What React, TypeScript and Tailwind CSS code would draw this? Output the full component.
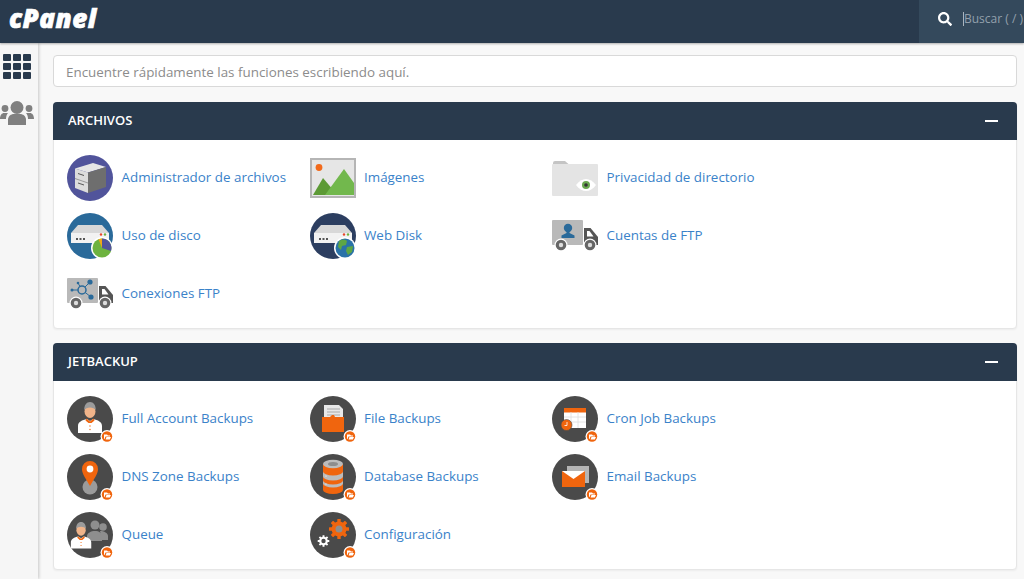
import React from "react";

const Badge = () => (
  <g>
    <circle cx="40" cy="40.5" r="6.5" fill="#fff" />
    <circle cx="40" cy="40.5" r="5.2" fill="#f0650e" />
    <path d="M37 38.5h3l1 1h2v1h-4.500l-1 2.500h-.5zM39.500 41h4.500l-1.200 2.500h-4.200z" fill="#fff" />
  </g>
);
const Dark = ({ children }: { children?: React.ReactNode }) => (
  <svg viewBox="0 0 46 46" className="w-[46px] h-[46px] shrink-0">
    <circle cx="23" cy="23" r="23" fill="#4a4a4a" />
    {children}
    <Badge />
  </svg>
);
const Person = () => (
  <g>
    <ellipse cx="23" cy="15.500" rx="5.500" ry="6.500" fill="#f0b48a" />
    <path d="M17.200 14c0-5 2.300-8 5.800-8s5.800 3 5.800 8c-2-3.500-9.600-3.500-11.600 0z" fill="#9b9b9b" />
    <path d="M11 37v-7c0-4 4-6 9-7l3 2 3-2c5 1 9 3 9 7v7z" fill="#fff" />
    <path d="M19.500 22.500l3.500 3 3.500-3 1 2-3 2.500h-3l-3-2.500z" fill="#f0650e" />
    <circle cx="23" cy="30" r=".7" fill="#f0650e" />
    <circle cx="23" cy="33.500" r=".7" fill="#f0650e" />
  </g>
);
const Server = ({ bg, children }: { bg: string; children: React.ReactNode }) => (
  <svg viewBox="0 0 46 46" className="w-[46px] h-[46px] shrink-0">
    <circle cx="23" cy="23" r="23" fill={bg} />
    <path d="M4 20l7-8h24l7 8z" fill="#d8d8d8" />
    <path d="M4 20h38v10H4z" fill="#f2f2f2" />
    <rect x="9" y="25" width="2" height="2" fill="#555" />
    <rect x="12.500" y="25" width="2" height="2" fill="#555" />
    <rect x="16" y="25" width="2" height="2" fill="#555" />
    <circle cx="34" cy="21.500" r="1.200" fill="#e8452c" />
    <circle cx="38" cy="21.500" r="1.200" fill="#6db33f" />
    <circle cx="35" cy="35" r="11" fill="#fff" />
    {children}
  </svg>
);
const Truck = ({ children }: { children: React.ReactNode }) => (
  <svg viewBox="0 0 46 46" className="w-[46px] h-[46px] shrink-0">
    <rect x="0" y="7" width="31" height="25" rx="1" fill="#b9b9b9" />
    <path d="M32 15h6.500l7.500 9v8H32z" fill="#555" />
    <path d="M35 18h2.500l4 5.500H35z" fill="#fff" />
    {children}
    <circle cx="9" cy="32" r="6.500" fill="#fff" />
    <circle cx="9" cy="32" r="5.300" fill="#666" />
    <circle cx="9" cy="32" r="2.200" fill="#ddd" />
    <circle cx="38" cy="32" r="6.500" fill="#fff" />
    <circle cx="38" cy="32" r="5.300" fill="#666" />
    <circle cx="38" cy="32" r="2.200" fill="#ddd" />
  </svg>
);

const FileManager = () => (
  <svg viewBox="0 0 46 46" className="w-[46px] h-[46px] shrink-0">
    <circle cx="23" cy="23" r="23" fill="#51549b" />
    <path d="M8 13.500L26 8l13 4-18 5.500z" fill="#e6e6e6" />
    <path d="M8 13.500l13 4V38L8 33z" fill="#dcdcdc" />
    <path d="M21 17.500l18-5.500v20l-18 6z" fill="#6e6e6e" />
    <path d="M8 23l13 4.500v1L8 24z" fill="#999" />
    <path d="M11 18l6 2v1l-6-2zM11 27.500l6 2v1l-6-2z" fill="#555" />
  </svg>
);
const Images = () => (
  <svg viewBox="0 0 46 40" className="w-[46px] h-[40px] shrink-0">
    <rect x="0" y="0" width="46" height="40" fill="#b5b5b5" />
    <rect x="2" y="2" width="42" height="36" fill="#e6e6e6" />
    <circle cx="9" cy="9.500" r="3.400" fill="#f26a1b" />
    <path d="M3 37l10-17 11 13-3 4z" fill="#5c9a35" />
    <path d="M15 37l19-26 10 14v12z" fill="#72b84d" />
  </svg>
);
const Privacy = () => (
  <svg viewBox="0 0 46 36" className="w-[46px] h-[36px] shrink-0">
    <path d="M1 3a2 2 0 012-2h10l4 3.500H1z" fill="#c4c4c4" />
    <rect x="0" y="4" width="46" height="32" rx="1" fill="#e4e4e4" />
    <path d="M24 25c6-8 14-8 20 0-6 8-14 8-20 0z" fill="#fff" />
    <circle cx="34" cy="25" r="4" fill="#6aa84f" />
    <circle cx="34" cy="25" r="1.800" fill="#333" />
  </svg>
);
const DiskUse = () => (
  <Server bg="#2a6a9a">
    <circle cx="35" cy="35" r="9.500" fill="#6db33f" />
    <path d="M35 35V25.500a9.500 9.500 0 019 12.500z" fill="#51549b" />
    <path d="M35 35l-3.500-8.800a9.500 9.500 0 013.500-.7z" fill="#f0a818" />
  </Server>
);
const WebDisk = () => (
  <Server bg="#2c3e60">
    <circle cx="35" cy="35" r="9.500" fill="#2a72a8" />
    <path d="M29 28c3-2 6-2 8 0l-1 4-4 1-1 4-3-3zM37 34l6-1-1 6-4 3-2-4z" fill="#5ea644" />
  </Server>
);
const ConnTruck = () => (
  <Truck>
    <path d="M5 19h10M15 19l8-8M15 19l9 7M11 12l4 7" stroke="#2a6a9a" strokeWidth="1" fill="none" />
    <circle cx="5" cy="19" r="1.500" fill="#2a6a9a" />
    <circle cx="11" cy="12" r="1.300" fill="#2a6a9a" />
    <circle cx="15" cy="19" r="4" fill="#b9b9b9" stroke="#2a6a9a" strokeWidth="1.500" />
    <circle cx="23" cy="11" r="2.600" fill="#2a6a9a" />
    <circle cx="24" cy="26" r="2.600" fill="#2a6a9a" />
  </Truck>
);
const FtpTruck = () => (
  <Truck>
    <circle cx="16" cy="15" r="4.200" fill="#2a6a9a" />
    <path d="M14.500 18h3v2l5 2.500V25H9.500v-2.500l5-2.500z" fill="#2a6a9a" />
  </Truck>
);
const Full = () => (
  <Dark>
    <Person />
  </Dark>
);
const Dns = () => (
  <Dark>
    <circle cx="23" cy="33" r="7.500" fill="#9b9b9b" />
    <path d="M23 32C19 25 15 20 15 15a8 8 0 0116 0c0 5-4 10-8 17z" fill="#f0650e" />
    <circle cx="23" cy="15" r="3.400" fill="#fff" />
  </Dark>
);
const Queue = () => (
  <Dark>
    <g fill="#8e8e8e">
      <circle cx="28" cy="13" r="4.500" />
      <path d="M20 29v-5c0-3 4-5 8-5s7 2 7 5v5z" />
      <circle cx="36" cy="15" r="3.800" />
      <path d="M33 19c4 0 8 2 8 5v4h-6z" />
    </g>
    <g transform="translate(-5.500 5) scale(.85)">
      <Person />
    </g>
  </Dark>
);
const FileB = () => (
  <Dark>
    <path d="M14 9h15l4 4v12H14z" fill="#e8e8e8" />
    <path d="M17 13h13M17 16h13M17 19h13" stroke="#aaa" strokeWidth="1" />
    <path d="M12 21h8l2-2h2l1 2h9v15H12z" fill="#f0650e" />
  </Dark>
);
const Database = () => (
  <Dark>
    <path d="M13 10h20v26a10 4 0 01-20 0z" fill="#f0650e" />
    <ellipse cx="23" cy="10" rx="10" ry="4.200" fill="#bcbcbc" />
    <ellipse cx="23" cy="10" rx="5" ry="2" fill="#8d8d8d" />
    <path d="M13 17.500a10 4 0 0020 0v5a10 4 0 01-20 0z" fill="#bcbcbc" />
    <path d="M13 26.500a10 4 0 0020 0v3a10 4 0 01-20 0z" fill="#bcbcbc" />
    <circle cx="16" cy="22" r=".6" fill="#fff" />
    <circle cx="16" cy="30" r=".6" fill="#fff" />
  </Dark>
);
const gear = (n: number) =>
  Array.from({ length: n }, (_, i) => (
    <rect key={i} x="-1.700" y="-10" width="3.400" height="20" rx=".5" transform={`rotate(${(i * 180) / n})`} />
  ));
const Config = () => (
  <Dark>
    <g transform="translate(29 17)" fill="#f0650e">
      {gear(4)}
      <circle r="7.500" />
      <circle r="3.500" fill="#8e8e8e" />
    </g>
    <g transform="translate(13.500 29) scale(.58)" fill="#fff">
      {gear(4)}
      <circle r="7.500" />
      <circle r="3.800" fill="#4a4a4a" />
    </g>
  </Dark>
);
const Cron = () => (
  <Dark>
    <rect x="12" y="12" width="22" height="20" fill="#fff" />
    <rect x="12" y="12" width="22" height="4.500" fill="#f0650e" />
    <path d="M12 21h22M12 26h22M19 16v16M26 16v16" stroke="#ddd" strokeWidth=".8" />
    <circle cx="14.500" cy="29" r="5.500" fill="#f0650e" stroke="#4a4a4a" strokeWidth=".6" />
    <path d="M15 26v3.500h-2.500" stroke="#fff" strokeWidth=".8" fill="none" />
  </Dark>
);
const EmailB = () => (
  <Dark>
    <rect x="15" y="12" width="22" height="17" fill="#b5b5b5" />
    <rect x="10" y="17" width="23" height="16" fill="#f0650e" />
    <path d="M10 17h23l-11.500 8z" fill="#fff" />
  </Dark>
);

type Item = { label: string; Icon: React.FC };
const Tool = ({ label, Icon }: Item) => (
  <a className="flex h-[58px] items-center gap-[8.500px] text-[13.400px] text-[#3a82c9]">
    <span className="flex w-[46px] h-[46px] items-center justify-center">
      <Icon />
    </span>
    <span className="pb-px">{label}</span>
  </a>
);
const Panel = ({ title, items }: { title: string; items: Item[] }) => (
  <section className="rounded-[4px] border border-[#e6e6e6] bg-white shadow-[0_1px_2px_rgba(0,0,0,0.05)]">
    <header className="flex h-[38px] -mx-px -mt-px items-center justify-between rounded-t-[4px] bg-[#293a4d] pl-[15px] pr-[19px] text-[13px] font-semibold text-white">
      <h2>{title}</h2>
      <span className="block h-[2px] w-[13px] bg-white" />
    </header>
    <div className="grid grid-cols-[242.500px_242.500px_1fr] pl-[13px] pt-[9px] pb-[5px]">
      {items.map((it) => (
        <Tool key={it.label} {...it} />
      ))}
    </div>
  </section>
);

export default function App() {
  return (
    <div className="h-[579px] w-[1024px] overflow-hidden bg-[#f8f8f8] font-['Open_Sans',sans-serif]">
      <header className="relative z-10 flex h-[43px] items-stretch justify-between bg-[#293a4d] shadow-[0_1px_2px_rgba(0,0,0,0.3)]">
        <span className="ml-[9px] font-['Open_Sans',sans-serif] text-[26px] font-extrabold italic leading-[36px] tracking-[0.5px] text-white [-webkit-text-stroke:0.7px_white]">
          cPanel
        </span>
        <div className="flex w-[105px] items-center bg-[#34495c] pb-[5px] pl-[19px]">
          <svg viewBox="0 0 512 512" className="h-[14px] w-[14px] fill-white">
            <path d="M505 442.700 405.300 343c-4.500-4.500-10.600-7-17-7H372c27.600-35.300 44-79.700 44-128C416 93.100 322.900 0 208 0S0 93.100 0 208s93.100 208 208 208c48.300 0 92.700-16.400 128-44v16.300c0 6.400 2.500 12.500 7 17l99.700 99.700c9.400 9.400 24.600 9.400 33.900 0l28.300-28.300c9.400-9.400 9.400-24.600.1-34zM208 336c-70.700 0-128-57.200-128-128 0-70.700 57.200-128 128-128 70.700 0 128 57.200 128 128 0 70.700-57.200 128-128 128z" />
          </svg>
          <span className="ml-[11px] border-l border-[#aab4bd] text-[12px] leading-[14px] text-[#93a0ac]">Buscar ( / )</span>
        </div>
      </header>
      <div className="flex h-[536px]">
        <aside className="flex w-[38px] shrink-0 flex-col items-start gap-[22px] bg-[#f6f6f6] pt-[11px] shadow-[1px_0_3px_rgba(0,0,0,0.2)]">
          <div className="ml-[3px] grid grid-cols-3 gap-[2px]">
            {Array.from({ length: 9 }, (_, i) => (
              <span key={i} className="block h-[7px] w-[8px] rounded-[1px] bg-[#293a4d]" />
            ))}
          </div>
          <svg viewBox="0 0 34 24" className="h-[24px] w-[34px] fill-[#808080]">
            <circle cx="17" cy="6.500" r="6.500" />
            <path d="M8 24v-5c0-4 3-6 6-6h6c3 0 6 2 6 6v5z" />
            <circle cx="5" cy="7.500" r="3.400" />
            <circle cx="29" cy="7.500" r="3.400" />
            <path d="M0 18c0-4 2-6 4-6h4c-1 1-2 3-2 6zM34 18c0-4-2-6-4-6h-4c1 1 2 3 2 6z" />
          </svg>
        </aside>
        <main className="flex min-w-0 flex-1 flex-col gap-[15px] pl-[15px] pr-[7px] pt-[12px]">
          <input
            placeholder="Encuentre rápidamente las funciones escribiendo aquí."
            className="h-[32px] w-full rounded-[4px] border border-[#d9d9d9] bg-white px-[12px] pt-px text-[13.400px] outline-none placeholder:text-[#8c8c8c]"
          />
          <div className="flex flex-col gap-[14px]">
            <Panel
              title="ARCHIVOS"
              items={[
                { label: "Administrador de archivos", Icon: FileManager },
                { label: "Imágenes", Icon: Images },
                { label: "Privacidad de directorio", Icon: Privacy },
                { label: "Uso de disco", Icon: DiskUse },
                { label: "Web Disk", Icon: WebDisk },
                { label: "Cuentas de FTP", Icon: FtpTruck },
                { label: "Conexiones FTP", Icon: ConnTruck },
              ]}
            />
            <Panel
              title="JETBACKUP"
              items={[
                { label: "Full Account Backups", Icon: Full },
                { label: "File Backups", Icon: FileB },
                { label: "Cron Job Backups", Icon: Cron },
                { label: "DNS Zone Backups", Icon: Dns },
                { label: "Database Backups", Icon: Database },
                { label: "Email Backups", Icon: EmailB },
                { label: "Queue", Icon: Queue },
                { label: "Configuración", Icon: Config },
              ]}
            />
          </div>
        </main>
      </div>
    </div>
  );
}
